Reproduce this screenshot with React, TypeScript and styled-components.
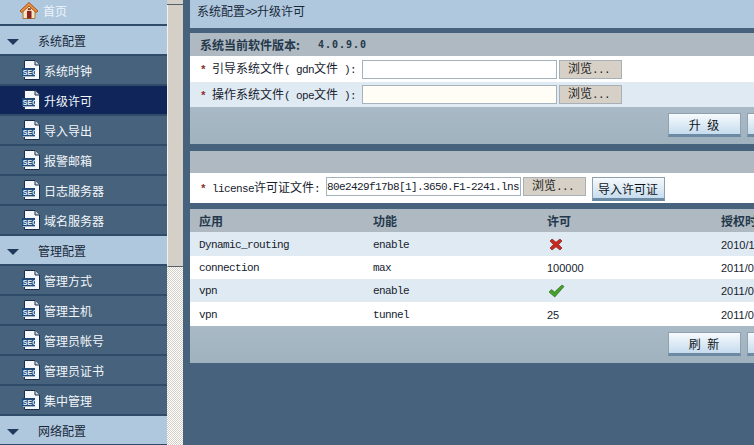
import React from 'react';
import styled, { createGlobalStyle } from 'styled-components';

const GlobalStyle = createGlobalStyle`
  html, body {
    margin: 0;
    padding: 0;
    overflow: hidden;
    background: #46627c;
  }
  body {
    font-family: "Noto Sans CJK SC", "Liberation Sans", sans-serif;
    font-size: 12px;
  }
`;

const groups = [
  {
    title: '系统配置',
    items: ['系统时钟', '升级许可', '导入导出', '报警邮箱', '日志服务器', '域名服务器'],
  },
  {
    title: '管理配置',
    items: ['管理方式', '管理主机', '管理员帐号', '管理员证书', '集中管理'],
  },
  { title: '网络配置', items: [] as string[] },
];

const licenses = [
  { app: 'Dynamic_routing', feature: 'enable', allow: 'no', date: '2010/12/31' },
  { app: 'connection', feature: 'max', allow: '100000', date: '2011/01/01' },
  { app: 'vpn', feature: 'enable', allow: 'yes', date: '2011/01/01' },
  { app: 'vpn', feature: 'tunnel', allow: '25', date: '2011/01/01' },
];

const HomeIcon = () => (
  <svg width="20" height="19" viewBox="0 0 20 19">
    <path d="M4 9 V17.5 H16 V9 L10 3.5 Z" fill="#f6e6bc" stroke="#a8763c" strokeWidth="1" />
    <path d="M1 10 L10 1.5 L19 10 L17 11.5 L10 5 L3 11.5 Z" fill="#e8923a" stroke="#a8502a" strokeWidth="1" />
    <rect x="8" y="10" width="4.5" height="7.5" fill="#8e2222" />
    <rect x="8.8" y="7.2" width="3" height="2" fill="#8e3a2a" />
  </svg>
);

const SecIcon = () => (
  <svg width="18" height="20" viewBox="0 0 18 20">
    <path d="M2.5 0.5 H13 L17.5 5 V19.5 H2.5 Z" fill="#f4f8fc" stroke="#1c2c44" strokeWidth="1" />
    <path d="M13 0.5 V5 H17.5" fill="#c8d6e4" stroke="#1c2c44" strokeWidth="1" />
    <rect x="0" y="8" width="13" height="8" fill="#1f4a78" />
    <rect x="1" y="16" width="12" height="1" fill="#9fb4c8" />
    <text x="0.8" y="15" fontFamily="Liberation Sans" fontWeight="700" fontSize="7" fill="#e8f2fa">SEC</text>
  </svg>
);

const CrossIcon = () => (
  <svg width="14" height="13" viewBox="0 0 14 13">
    <path d="M1 3 L3 1 L7 4.2 L11 1 L13 3 L9.6 6.5 L13 10 L11 12 L7 8.8 L3 12 L1 10 L4.4 6.5 Z" fill="#c8281e" stroke="#7a2a22" strokeWidth="0.7" />
  </svg>
);

const CheckIcon = () => (
  <svg width="17" height="14" viewBox="0 0 17 14">
    <path d="M1 8 L3.5 5.5 L6.5 8 L14 1 L16 2.5 L6.8 13 Z" fill="#46a02c" stroke="#2e6e22" strokeWidth="0.7" />
  </svg>
);

const App: React.FC = () => {
  return (
    <Page>
      <GlobalStyle />
      <Sidebar>
        <HomeRow>
          <HomeIcon />
          <span>首页</span>
        </HomeRow>
        {groups.map((group) => (
          <React.Fragment key={group.title}>
            <SectionRow>
              <Triangle />
              <span>{group.title}</span>
            </SectionRow>
            {group.items.map((item) => (
              <ItemRow key={item} $active={item === '升级许可'}>
                <SecIcon />
                <span>{item}</span>
              </ItemRow>
            ))}
          </React.Fragment>
        ))}
      </Sidebar>
      <ScrollTrack>
        <ScrollArrow />
        <ScrollThumb />
      </ScrollTrack>
      <Main>
        <Breadcrumb>系统配置<Arrows>&gt;&gt;</Arrows>升级许可</Breadcrumb>
        <Panel>
          <PanelHead>
            系统当前软件版本:<Version>4.0.9.0</Version>
          </PanelHead>
          <FormRow $height={26}>
            <FormLabel $width={172}>
              <Star>*</Star>
              引导系统文件<Latin>( gdn</Latin>文件<Latin> ):</Latin>
            </FormLabel>
            <FileInput $width={195} readOnly />
            <BrowseButton>浏览<Latin>...</Latin></BrowseButton>
          </FormRow>
          <FormRow $height={25} $tinted>
            <FormLabel $width={172}>
              <Star>*</Star>
              操作系统文件<Latin>( ope</Latin>文件<Latin> ):</Latin>
            </FormLabel>
            <FileInput $width={195} $cream readOnly />
            <BrowseButton>浏览<Latin>...</Latin></BrowseButton>
          </FormRow>
          <Footer>
            <ActionButton>升 级</ActionButton>
            <ActionButton>返 回</ActionButton>
          </Footer>
        </Panel>
        <Panel>
          <PanelHead />
          <LicenseRow>
            <FormLabel $width={136}>
              <Star>*</Star>
              <Latin>license</Latin>许可证文件<Latin>:</Latin>
            </FormLabel>
            <FileInput $width={195} readOnly value="80e2429f17b8[1].3650.F1-2241.lns" />
            <BrowseButton>浏览<Latin>...</Latin></BrowseButton>
            <ImportButton>导入许可证</ImportButton>
          </LicenseRow>
          <TableGap />
          <TableHead>
            <span>应用</span>
            <span>功能</span>
            <span>许可</span>
            <span>授权时间</span>
          </TableHead>
          {licenses.map((row, index) => (
            <TableRow key={index} $tinted={index % 2 === 0} $height={index === 0 || index === 3 ? 24 : 23}>
              <Cell>{row.app}</Cell>
              <Cell>{row.feature}</Cell>
              {row.allow === 'no' && <IconCell $left={2}><CrossIcon /></IconCell>}
              {row.allow === 'yes' && <IconCell $left={1}><CheckIcon /></IconCell>}
              {row.allow !== 'no' && row.allow !== 'yes' && <Number>{row.allow}</Number>}
              <Number>{row.date}</Number>
            </TableRow>
          ))}
          <Footer>
            <ActionButton>刷 新</ActionButton>
            <ActionButton>返 回</ActionButton>
          </Footer>
        </Panel>
      </Main>
    </Page>
  );
};

const Page = styled.div`
  display: flex;
  width: 754px;
  height: 445px;
  overflow: hidden;
  background: #46627c;
`;

const Sidebar = styled.div`
  display: flex;
  flex-direction: column;
  flex: none;
  width: 167px;
  height: 445px;
  overflow: hidden;
  background: #46627c;
`;

const HomeRow = styled.div`
  display: flex;
  flex: none;
  align-items: center;
  gap: 4px;
  box-sizing: border-box;
  height: 26px;
  padding: 0 0 4px 19px;
  color: #eef4fa;
  background: #b0c8de;
  border-bottom: 2px solid #2e4c6a;
`;

const SectionRow = styled.div`
  display: flex;
  flex: none;
  align-items: center;
  box-sizing: border-box;
  height: 30px;
  padding-left: 7px;
  color: #18283a;
  background: #b0c8de;
  border-bottom: 2px solid #2e4c6a;
`;

const Triangle = styled.div`
  flex: none;
  width: 0;
  height: 0;
  margin: 3px 19px 0 0;
  border-top: 6px solid #1f3a5c;
  border-left: 6px solid transparent;
  border-right: 6px solid transparent;
`;

const ItemRow = styled.div<{ $active?: boolean }>`
  display: flex;
  flex: none;
  align-items: center;
  gap: 4px;
  box-sizing: border-box;
  height: 30px;
  padding-left: 22px;
  color: #f2f6fa;
  background: ${(props) => (props.$active ? '#10265a' : '#46627c')};
  border-bottom: 2px solid #2e4c6a;
`;

const ScrollTrack = styled.div`
  display: flex;
  flex-direction: column;
  flex: none;
  width: 16px;
  height: 445px;
  background: repeating-conic-gradient(#d4d0c8 0 25%, #ffffff 0 50%) 0 0 / 2px 2px;
`;

const ScrollArrow = styled.div`
  flex: none;
  height: 4px;
  background: #d4d0c8;
  border-bottom: 1px solid #56606a;
`;

const ScrollThumb = styled.div`
  flex: none;
  box-sizing: border-box;
  height: 262px;
  background: #d4d0c8;
  border-left: 1px solid #f4f2ec;
  border-bottom: 1px solid #56606a;
`;

const Main = styled.div`
  flex: none;
  width: 720px;
  margin-left: 7px;
`;

const Breadcrumb = styled.div`
  box-sizing: border-box;
  height: 28px;
  padding: 2px 0 0 7px;
  color: #18283a;
  background: #b0c8de;
`;

const Arrows = styled.span`
  font-family: "Liberation Sans", sans-serif;
  font-size: 12px;
  letter-spacing: -1.5px;
  margin-right: 1px;
`;

const Panel = styled.div`
  margin-top: 5px;
  background: #a2b4c0;
  & + & {
    margin-top: 7px;
  }
`;

const PanelHead = styled.div`
  display: flex;
  align-items: center;
  box-sizing: border-box;
  height: 23px;
  padding-left: 10px;
  font-weight: 700;
  color: #24384c;
  background: #aeb9c1;
`;

const Version = styled.span`
  margin-left: 18px;
  font-family: "DejaVu Sans Mono", monospace;
  font-size: 10px;
  font-weight: 700;
  letter-spacing: 1px;
`;

const FormRow = styled.div<{ $height: number; $tinted?: boolean }>`
  display: flex;
  align-items: center;
  box-sizing: border-box;
  height: ${(props) => props.$height}px;
  background: ${(props) => (props.$tinted ? '#e0eaf2' : '#ffffff')};
`;

const LicenseRow = styled.div`
  display: flex;
  align-items: flex-start;
  box-sizing: border-box;
  height: 30px;
  margin-top: -1px;
  padding-top: 4px;
  background: #ffffff;
`;

const FormLabel = styled.label<{ $width: number }>`
  flex: none;
  box-sizing: border-box;
  width: ${(props) => props.$width}px;
  padding-left: 10px;
  line-height: 19px;
  white-space: pre;
  color: #16222e;
`;

const Star = styled.span`
  display: inline-block;
  width: 12px;
  font-family: "Liberation Mono", monospace;
  font-size: 11px;
  font-weight: 700;
  color: #8a2c2c;
`;

const Latin = styled.span`
  font-family: "Liberation Mono", monospace;
  font-size: 11px;
  letter-spacing: -0.6px;
`;

const FileInput = styled.input<{ $width: number; $cream?: boolean }>`
  flex: none;
  box-sizing: border-box;
  width: ${(props) => props.$width}px;
  height: 19px;
  padding: 0;
  font-family: "Liberation Mono", monospace;
  font-size: 11px;
  letter-spacing: -0.6px;
  color: #16222e;
  background: ${(props) => (props.$cream ? '#fffdf6' : '#ffffff')};
  border: 1px solid #a4b2bc;
  border-radius: 0;
  outline: none;
`;

const BrowseButton = styled.button`
  flex: none;
  box-sizing: border-box;
  width: 63px;
  height: 19px;
  margin-left: 2px;
  padding: 0 0 2px 8px;
  font-family: inherit;
  font-size: 12px;
  line-height: 14px;
  text-align: left;
  color: #1c1c1c;
  background: #d6d0c6;
  border: 1px solid #a6b0b6;
  border-radius: 0;
`;

const ActionButton = styled.button`
  flex: none;
  box-sizing: border-box;
  width: 73px;
  height: 24px;
  padding: 0 1px 0 0;
  font-family: inherit;
  font-size: 12px;
  word-spacing: 4px;
  color: #101418;
  background: linear-gradient(#f6fafd, #c6dcee);
  border: 1px solid #90a0ae;
  border-bottom: 3px solid #6c8aa4;
  border-radius: 0;
`;

const ImportButton = styled(ActionButton)`
  margin-left: 6px;
`;

const Footer = styled.div`
  display: flex;
  justify-content: flex-end;
  gap: 6px;
  box-sizing: border-box;
  height: 37px;
  padding: 6px 90px 0 0;
  background: linear-gradient(#a9bac6, #a0b2be);
`;

const TableGap = styled.div`
  height: 6px;
  background: #46627c;
`;

const TableHead = styled.div`
  display: grid;
  grid-template-columns: repeat(4, 174px);
  align-items: center;
  box-sizing: border-box;
  height: 23px;
  padding-left: 9px;
  font-weight: 700;
  color: #24384c;
  background: #aeb9c1;
`;

const TableRow = styled.div<{ $tinted?: boolean; $height: number }>`
  display: grid;
  grid-template-columns: repeat(4, 174px);
  align-items: center;
  box-sizing: border-box;
  height: ${(props) => props.$height}px;
  padding: 1px 0 0 9px;
  background: ${(props) => (props.$tinted ? '#e0eaf2' : '#ffffff')};
`;

const Cell = styled.div`
  font-family: "Liberation Mono", monospace;
  font-size: 11px;
  letter-spacing: -0.6px;
  color: #16222e;
`;

const Number = styled.div`
  font-family: "Liberation Sans", sans-serif;
  font-size: 11px;
  color: #16222e;
`;

const IconCell = styled.div<{ $left: number }>`
  display: flex;
  padding-left: ${(props) => props.$left}px;
`;

export default App;
